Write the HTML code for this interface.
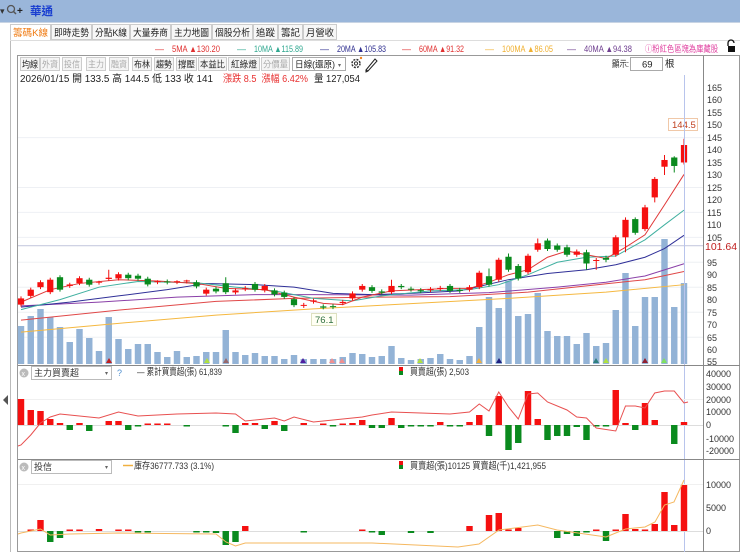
<!DOCTYPE html>
<html><head><meta charset="utf-8"><style>
html,body{margin:0;padding:0;width:740px;height:552px;overflow:hidden;background:#fff}
svg{display:block}
text{font-family:"Liberation Sans","Noto Sans CJK TC",sans-serif}
</style></head><body>
<svg width="740" height="552" viewBox="0 0 740 552" xmlns="http://www.w3.org/2000/svg">
<rect x="0" y="0" width="740" height="22" fill="#9ab6da"/>
<rect x="0" y="22" width="740" height="1" fill="#c8d4e4"/>
<text x="0" y="14" font-size="9" fill="#333">▾</text>
<circle cx="11" cy="9" r="3.5" fill="none" stroke="#555" stroke-width="1.3"/>
<line x1="13.5" y1="11.5" x2="16" y2="14" stroke="#555" stroke-width="1.5"/>
<text x="17" y="14" font-size="10" font-weight="bold" fill="#222">+</text>
<text x="30" y="15" font-size="11.5" fill="#1a3fd0" font-weight="bold">華通</text>
<line x1="10.5" y1="40" x2="10.5" y2="552" stroke="#bbb"/>
<path d="M3 400 L8 395 L8 405 Z" fill="#555"/>
<g font-size="9.5" fill="#222" lengthAdjust="spacingAndGlyphs">
<rect x="10.5" y="24.5" width="40" height="16" fill="#fff" stroke="#ccc"/>
<text x="13" y="36" fill="#f07a10" textLength="35" lengthAdjust="spacingAndGlyphs">籌碼K線</text>
<rect x="51.5" y="24.5" width="40" height="15" fill="#f7f7f7" stroke="#ccc"/><text x="54" y="36" textLength="35" lengthAdjust="spacingAndGlyphs">即時走勢</text>
<rect x="92.5" y="24.5" width="37" height="15" fill="#f7f7f7" stroke="#ccc"/><text x="95" y="36" textLength="32" lengthAdjust="spacingAndGlyphs">分點K線</text>
<rect x="130.5" y="24.5" width="40" height="15" fill="#f7f7f7" stroke="#ccc"/><text x="133" y="36" textLength="35" lengthAdjust="spacingAndGlyphs">大量券商</text>
<rect x="171.5" y="24.5" width="40" height="15" fill="#f7f7f7" stroke="#ccc"/><text x="174" y="36" textLength="35" lengthAdjust="spacingAndGlyphs">主力地圖</text>
<rect x="212.5" y="24.5" width="40" height="15" fill="#f7f7f7" stroke="#ccc"/><text x="215" y="36" textLength="35" lengthAdjust="spacingAndGlyphs">個股分析</text>
<rect x="253.5" y="24.5" width="24" height="15" fill="#f7f7f7" stroke="#ccc"/><text x="256" y="36" textLength="19" lengthAdjust="spacingAndGlyphs">追蹤</text>
<rect x="278.5" y="24.5" width="24" height="15" fill="#f7f7f7" stroke="#ccc"/><text x="281" y="36" textLength="19" lengthAdjust="spacingAndGlyphs">籌記</text>
<rect x="303.5" y="24.5" width="33" height="15" fill="#f7f7f7" stroke="#ccc"/><text x="306" y="36" textLength="28" lengthAdjust="spacingAndGlyphs">月營收</text>
</g>
<line x1="10" y1="40.5" x2="740" y2="40.5" stroke="#ddd"/>
<g font-size="9">
<text x="155" y="52" fill="#e03030">—</text><text x="172" y="52" fill="#e03030" textLength="48" lengthAdjust="spacingAndGlyphs">5MA ▲130.20</text>
<text x="237" y="52" fill="#30a890">—</text><text x="254" y="52" fill="#30a890" textLength="49" lengthAdjust="spacingAndGlyphs">10MA ▲115.89</text>
<text x="320" y="52" fill="#303090">—</text><text x="337" y="52" fill="#303090" textLength="49" lengthAdjust="spacingAndGlyphs">20MA ▲105.83</text>
<text x="402" y="52" fill="#e03030">—</text><text x="419" y="52" fill="#e03030" textLength="45" lengthAdjust="spacingAndGlyphs">60MA ▲91.32</text>
<text x="485" y="52" fill="#f0b030">—</text><text x="502" y="52" fill="#f0b030" textLength="51" lengthAdjust="spacingAndGlyphs">100MA ▲86.05</text>
<text x="567" y="52" fill="#704090">—</text><text x="584" y="52" fill="#704090" textLength="48" lengthAdjust="spacingAndGlyphs">40MA ▲94.38</text>
<text x="645" y="52" fill="#e040a0" textLength="73" lengthAdjust="spacingAndGlyphs">ⓘ粉紅色區塊為庫藏股</text>
</g>
<rect x="728" y="46" width="7" height="6" fill="#111"/>
<path d="M728 46 V43 a3 3 0 0 1 6 0" fill="none" stroke="#111" stroke-width="1.3"/>
<rect x="17.5" y="55.5" width="722" height="496" fill="#fff" stroke="#999"/>
<g font-size="9">
<rect x="20.5" y="57.5" width="19" height="13" fill="#f5f5f5" stroke="#ccc"/><text x="22" y="67.5" fill="#222" textLength="16" lengthAdjust="spacingAndGlyphs">均線</text>
<rect x="40.5" y="57.5" width="19" height="13" fill="#f5f5f5" stroke="#ccc"/><text x="42" y="67.5" fill="#aaa" textLength="16" lengthAdjust="spacingAndGlyphs">外資</text>
<rect x="62.5" y="57.5" width="19" height="13" fill="#f5f5f5" stroke="#ccc"/><text x="64" y="67.5" fill="#aaa" textLength="16" lengthAdjust="spacingAndGlyphs">投信</text>
<rect x="86.5" y="57.5" width="19" height="13" fill="#f5f5f5" stroke="#ccc"/><text x="88" y="67.5" fill="#aaa" textLength="16" lengthAdjust="spacingAndGlyphs">主力</text>
<rect x="109.5" y="57.5" width="19" height="13" fill="#f5f5f5" stroke="#ccc"/><text x="111" y="67.5" fill="#aaa" textLength="16" lengthAdjust="spacingAndGlyphs">融資</text>
<rect x="132.5" y="57.5" width="19" height="13" fill="#f5f5f5" stroke="#ccc"/><text x="134" y="67.5" fill="#222" textLength="16" lengthAdjust="spacingAndGlyphs">布林</text>
<rect x="154.5" y="57.5" width="19" height="13" fill="#f5f5f5" stroke="#ccc"/><text x="156" y="67.5" fill="#222" textLength="16" lengthAdjust="spacingAndGlyphs">趨勢</text>
<rect x="176.5" y="57.5" width="20" height="13" fill="#f5f5f5" stroke="#ccc"/><text x="178" y="67.5" fill="#222" textLength="17" lengthAdjust="spacingAndGlyphs">撐壓</text>
<rect x="198.5" y="57.5" width="28" height="13" fill="#f5f5f5" stroke="#ccc"/><text x="200" y="67.5" fill="#222" textLength="25" lengthAdjust="spacingAndGlyphs">本益比</text>
<rect x="228.5" y="57.5" width="31" height="13" fill="#f5f5f5" stroke="#ccc"/><text x="231" y="67.5" fill="#222" textLength="26" lengthAdjust="spacingAndGlyphs">紅綠燈</text>
<rect x="261.5" y="57.5" width="28" height="13" fill="#f5f5f5" stroke="#ccc"/><text x="263" y="67.5" fill="#aaa" textLength="25" lengthAdjust="spacingAndGlyphs">分價量</text>
<rect x="292.5" y="57.5" width="53" height="13" fill="#fff" stroke="#aaa"/><text x="295" y="67.5" fill="#222" textLength="40" lengthAdjust="spacingAndGlyphs">日線(還原)</text><text x="338" y="67" font-size="6" fill="#666">▾</text>
</g>
<circle cx="356" cy="63.5" r="4" fill="none" stroke="#333" stroke-width="1.5" stroke-dasharray="2 1.2"/>
<circle cx="356" cy="63.5" r="1.6" fill="none" stroke="#333"/>
<circle cx="361" cy="58" r="1.2" fill="#f08020"/>
<path d="M366 70 L375 59 L377 61 L368 71 Z M366 70 L366 72 L368 71" fill="none" stroke="#222" stroke-width="1"/>
<text x="612" y="67" font-size="9" fill="#222" textLength="17" lengthAdjust="spacingAndGlyphs">顯示:</text>
<rect x="630.5" y="57.5" width="32" height="13" fill="#fff" stroke="#aaa"/><text x="642" y="67.5" font-size="9.5" fill="#222">69</text>
<text x="665" y="67" font-size="9.5" fill="#222">根</text>
<text x="20" y="82" font-size="10" fill="#222" textLength="193" lengthAdjust="spacingAndGlyphs">2026/01/15 開 133.5 高 144.5 低 133 收 141</text>
<text x="223" y="82" font-size="10" fill="#e83030" textLength="85" lengthAdjust="spacingAndGlyphs">漲跌 8.5 &#160;漲幅 6.42%</text>
<text x="314" y="82" font-size="10" fill="#222" textLength="46" lengthAdjust="spacingAndGlyphs">量 127,054</text>
<g stroke="#eef0f4">
<line x1="18" y1="237.4" x2="703" y2="237.4"/><line x1="18" y1="262.3" x2="703" y2="262.3"/>
<line x1="18" y1="287.3" x2="703" y2="287.3"/><line x1="18" y1="312.2" x2="703" y2="312.2"/>
<line x1="18" y1="337.2" x2="703" y2="337.2"/><line x1="18" y1="187.5" x2="703" y2="187.5"/>
<line x1="18" y1="137.6" x2="703" y2="137.6"/><line x1="18" y1="212.4" x2="703" y2="212.4"/>
</g>
<line x1="18" y1="245.7" x2="703" y2="245.7" stroke="#c8cce0" stroke-width="1.2"/>
<g transform="matrix(9.75,0,0,1,21,0)" fill="#93b3d6">
<rect x="-.33" y="326" width=".66" height="38"/><rect x=".67" y="316" width=".66" height="48"/><rect x="1.67" y="309" width=".66" height="55"/><rect x="2.67" y="317" width=".66" height="47"/><rect x="3.67" y="327" width=".66" height="37"/><rect x="4.67" y="342" width=".66" height="22"/><rect x="5.67" y="329" width=".66" height="35"/><rect x="6.67" y="338" width=".66" height="26"/><rect x="7.67" y="351" width=".66" height="13"/><rect x="8.67" y="317" width=".66" height="47"/><rect x="9.67" y="339" width=".66" height="25"/><rect x="10.67" y="349" width=".66" height="15"/><rect x="11.67" y="344" width=".66" height="20"/><rect x="12.67" y="344" width=".66" height="20"/><rect x="13.67" y="352" width=".66" height="12"/><rect x="14.67" y="357" width=".66" height="7"/><rect x="15.67" y="351" width=".66" height="13"/><rect x="16.67" y="357" width=".66" height="7"/><rect x="17.67" y="356" width=".66" height="8"/><rect x="18.67" y="352" width=".66" height="12"/><rect x="19.67" y="352" width=".66" height="12"/><rect x="20.67" y="330" width=".66" height="34"/><rect x="21.67" y="352" width=".66" height="12"/><rect x="22.67" y="355" width=".66" height="9"/><rect x="23.67" y="353" width=".66" height="11"/><rect x="24.67" y="356" width=".66" height="8"/><rect x="25.67" y="356" width=".66" height="8"/><rect x="26.67" y="359" width=".66" height="5"/><rect x="27.67" y="355" width=".66" height="9"/><rect x="28.67" y="359" width=".66" height="5"/><rect x="29.67" y="359" width=".66" height="5"/><rect x="30.67" y="359" width=".66" height="5"/><rect x="31.67" y="359" width=".66" height="5"/><rect x="32.67" y="357" width=".66" height="7"/><rect x="33.67" y="353" width=".66" height="11"/><rect x="34.67" y="354" width=".66" height="10"/><rect x="35.67" y="357" width=".66" height="7"/><rect x="36.67" y="356" width=".66" height="8"/><rect x="37.67" y="346" width=".66" height="18"/><rect x="38.67" y="358" width=".66" height="6"/><rect x="39.67" y="360" width=".66" height="4"/><rect x="40.67" y="359" width=".66" height="5"/><rect x="41.67" y="358" width=".66" height="6"/><rect x="42.67" y="354" width=".66" height="10"/><rect x="43.67" y="359" width=".66" height="5"/><rect x="44.67" y="360" width=".66" height="4"/><rect x="45.67" y="356" width=".66" height="8"/><rect x="46.67" y="327" width=".66" height="37"/><rect x="47.67" y="297" width=".66" height="67"/><rect x="48.67" y="308" width=".66" height="56"/><rect x="49.67" y="281" width=".66" height="83"/><rect x="50.67" y="316" width=".66" height="48"/><rect x="51.67" y="314" width=".66" height="50"/><rect x="52.67" y="293" width=".66" height="71"/><rect x="53.67" y="331" width=".66" height="33"/><rect x="54.67" y="336" width=".66" height="28"/><rect x="55.67" y="336" width=".66" height="28"/><rect x="56.67" y="344" width=".66" height="20"/><rect x="57.67" y="333" width=".66" height="31"/><rect x="58.67" y="346" width=".66" height="18"/><rect x="59.67" y="343" width=".66" height="21"/><rect x="60.67" y="310" width=".66" height="54"/><rect x="61.67" y="273" width=".66" height="91"/><rect x="62.67" y="326" width=".66" height="38"/><rect x="63.67" y="297" width=".66" height="67"/><rect x="64.67" y="297" width=".66" height="67"/><rect x="65.67" y="239" width=".66" height="125"/><rect x="66.67" y="307" width=".66" height="57"/><rect x="67.67" y="283" width=".66" height="81"/>
</g>
<g>
<path d="M106 363 l3 -5 l3 5z" fill="#c02020"/><path d="M204 363 l3 -5 l3 5z" fill="#b0e040"/><path d="M223 363 l3 -5 l3 5z" fill="#a0d8e0"/><path d="M223 363 l3 -5 l3 5z" fill="#902020" opacity=".6"/>
<path d="M300 363 l3 -5 l3 5z" fill="#5020a0"/><path d="M329 363 l3 -5 l3 5z" fill="#f09090"/><path d="M339 363 l3 -5 l3 5z" fill="#f09090"/>
<path d="M417 363 l3 -5 l3 5z" fill="#b0e040"/><path d="M476 363 l3 -5 l3 5z" fill="#f0b040"/><path d="M496 363 l3 -5 l3 5z" fill="#202080"/>
<path d="M593 363 l3 -5 l3 5z" fill="#308080"/><path d="M603 363 l3 -5 l3 5z" fill="#b0e040"/><path d="M642 363 l3 -5 l3 5z" fill="#902030"/><path d="M661 363 l3 -5 l3 5z" fill="#80e060"/>
</g>
<g transform="matrix(9.75,0,0,-2.494,21,499.17)" fill="none">
<polyline vector-effect="non-scaling-stroke" stroke="#f5b840" stroke-width="1" points="0,67 10,70.5 20,73.8 30,76.3 40,78.4 50,80.5 60,83 68,86"/>
<polyline vector-effect="non-scaling-stroke" stroke="#e04848" stroke-width="1" points="0,71.8 10,75.8 20,79.3 28,80.5 36,81 44,81.2 52,83 58,85.5 64,88 68,91.3"/>
<polyline vector-effect="non-scaling-stroke" stroke="#8a40a8" stroke-width="1" points="0,77.5 8,79 16,81 24,82 30,82 40,81.8 48,82.8 55,85 60,87 64,89.5 68,94.4"/>
<polyline vector-effect="non-scaling-stroke" stroke="#303098" stroke-width="1" points="0,77 5,79 10,81.5 15,84 19,86.5 24,86 28,85 32,82.5 36,82 40,82.5 45,83.5 50,88 54,90.5 58,92 61,94 64,97 66,100.5 68,105.8"/>
<polyline vector-effect="non-scaling-stroke" stroke="#40b0a0" stroke-width="1" points="0,76 4,80 8,85 12,87.3 18,86.8 22,85 26,83.5 30,80.5 34,79.5 37,81.5 42,83.5 46,84 49,86 52,90 55,95 58,97 61,97.5 64,104 66,110 68,115.9"/>
<polyline vector-effect="non-scaling-stroke" stroke="#e03838" stroke-width="1" points="0,79 3,84 6,86.5 10,88 14,87.5 18,86.5 21,84.5 25,84 28,81 31,78.5 33,78 35,81 38,83.5 44,84.5 46,84.5 48,87 50,90 52,92 54,97 56,99.5 58,98 60,96.5 62,101 64,106 66,118 68,130.2"/>
<path vector-effect="non-scaling-stroke" stroke="#f01010" stroke-width="1" d="M0 77.2V81.3M1 80.7V84.8M2 84.2V87.8M3 82.2V88.8M5 84.7V86.8M6 85.8V89.4M8 86V87.6M9 87.5V92M10 87.7V91M14 86.2V87.8M16 86.2V87.8M17 86.5V88M19 81.6V84.8M22 82.1V84.5M23 83.4V85.4M25 82.9V86.3M29 76.7V78.7M30 78.4V80.4M33 77.8V79.9M34 79.7V83.3M35 83.2V86.3M38 82.2V88M42 83V85M43 83.5V85.5M46 83.2V85.8M47 84.2V91.6M49 87.2V96.8M52 90.2V98.4M53 99.2V104.5M57 97.2V100.1M59 92V96.7M61 97.2V105.8M62 99V113M64 107.5V118M65 119V129.2M66 130V138M68 134.2V144.5"/>
<path vector-effect="non-scaling-stroke" stroke="#0a8a1e" stroke-width="1" d="M4 83.2V89.8M7 85.2V88.8M11 87.8V90.8M12 87.6V90.4M13 85.3V89.2M15 86.1V88.1M18 84.5V87.8M20 82.5V85.2M21 82.2V89M24 83.2V87.1M26 81.3V84.5M27 80.3V83.6M28 77V81M31 76.1V78.1M32 76.2V78.2M36 82.7V85.8M37 82V84.1M39 84.2V86.3M40 83.2V85.2M41 82.6V84.6M44 82.7V86.3M45 82.7V84.7M48 85.2V92.5M50 91.2V98.5M51 87.7V94.3M54 99.5V104.5M55 99.2V102.5M56 97.2V102M58 92V100M60 95V97.6M63 106V113M67 131V137.5"/>
<g fill="#f51010">
<rect x="-.32" y="78" width=".64" height="2.5"/><rect x=".68" y="81.5" width=".64" height="2.5"/><rect x="1.68" y="85" width=".64" height="2"/><rect x="2.68" y="83" width=".64" height="5"/><rect x="4.68" y="85.5" width=".64" height=".6"/><rect x="5.68" y="86.6" width=".64" height="2"/><rect x="7.68" y="86.8" width=".64" height=".4"/><rect x="8.68" y="88.3" width=".64" height=".5"/><rect x="9.68" y="88.5" width=".64" height="1.7"/><rect x="13.68" y="87" width=".64" height=".4"/><rect x="15.68" y="87" width=".64" height=".4"/><rect x="16.68" y="87.3" width=".64" height=".4"/><rect x="18.68" y="82.4" width=".64" height="1.6"/><rect x="21.68" y="82.9" width=".64" height=".8"/><rect x="22.68" y="84.2" width=".64" height=".4"/><rect x="24.68" y="83.7" width=".64" height="1.8"/><rect x="28.68" y="77.5" width=".64" height=".4"/><rect x="29.68" y="79.2" width=".64" height=".5"/><rect x="32.68" y="78.6" width=".64" height=".5"/><rect x="33.68" y="80.5" width=".64" height="2"/><rect x="34.68" y="84" width=".64" height="1.5"/><rect x="37.68" y="83" width=".64" height="2.5"/><rect x="41.68" y="83.8" width=".64" height=".4"/><rect x="42.68" y="84.3" width=".64" height=".4"/><rect x="45.68" y="84" width=".64" height="1"/><rect x="46.68" y="85" width=".64" height="5.8"/><rect x="48.68" y="88" width=".64" height="8"/><rect x="51.68" y="91" width=".64" height="6.6"/><rect x="52.68" y="100" width=".64" height="2.6"/><rect x="56.68" y="98" width=".64" height="1.3"/><rect x="58.68" y="95.5" width=".64" height=".4"/><rect x="60.68" y="98" width=".64" height="7"/><rect x="61.68" y="105" width=".64" height="7"/><rect x="63.68" y="108.3" width=".64" height="8.7"/><rect x="64.68" y="121" width=".64" height="7.4"/><rect x="65.68" y="133.3" width=".64" height="2.7"/><rect x="67.68" y="135" width=".64" height="7"/>
</g>
<g fill="#0a8a1e">
<rect x="3.68" y="84" width=".64" height="5"/><rect x="6.68" y="86" width=".64" height="2"/><rect x="10.68" y="88.6" width=".64" height="1.4"/><rect x="11.68" y="88.4" width=".64" height="1.2"/><rect x="12.68" y="86.1" width=".64" height="2.3"/><rect x="14.68" y="86.9" width=".64" height=".4"/><rect x="17.68" y="85.3" width=".64" height="1.7"/><rect x="19.68" y="83.3" width=".64" height="1.1"/><rect x="20.68" y="83" width=".64" height="3.6"/><rect x="23.68" y="84" width=".64" height="2.3"/><rect x="25.68" y="82.1" width=".64" height="1.6"/><rect x="26.68" y="81.1" width=".64" height="1.7"/><rect x="27.68" y="77.8" width=".64" height="2.4"/><rect x="30.68" y="76.8" width=".64" height=".5"/><rect x="31.68" y="77" width=".64" height=".4"/><rect x="35.68" y="83.5" width=".64" height="1.5"/><rect x="36.68" y="82.8" width=".64" height=".5"/><rect x="38.68" y="85" width=".64" height=".5"/><rect x="39.68" y="84" width=".64" height=".4"/><rect x="40.68" y="83.4" width=".64" height=".4"/><rect x="43.68" y="83.5" width=".64" height="2"/><rect x="44.68" y="83.5" width=".64" height=".4"/><rect x="47.68" y="86" width=".64" height="3.4"/><rect x="49.68" y="92" width=".64" height="5.2"/><rect x="50.68" y="88.5" width=".64" height="5"/><rect x="53.68" y="100.3" width=".64" height="3.4"/><rect x="54.68" y="100" width=".64" height="1.7"/><rect x="55.68" y="98" width=".64" height="3"/><rect x="57.68" y="94.5" width=".64" height="4.5"/><rect x="59.68" y="96" width=".64" height=".8"/><rect x="62.68" y="106.8" width=".64" height="5.5"/><rect x="66.68" y="133.6" width=".64" height="3.4"/>
</g>
</g>
<rect x="668.5" y="118.5" width="29" height="12" fill="#fff" stroke="#f0c8a8"/>
<text x="672" y="128" font-size="9.5" fill="#c04020">144.5</text>
<rect x="311.5" y="313.5" width="25" height="12" fill="#fffff4" stroke="#dde0c0"/>
<text x="315" y="323" font-size="9.5" fill="#307040">76.1</text>
<line x1="684.5" y1="75" x2="684.5" y2="552" stroke="#b8c4ec"/>
<line x1="703.5" y1="56" x2="703.5" y2="552" stroke="#888"/>
<g font-size="9" fill="#333">
<text x="707" y="91">165</text><text x="707" y="103">160</text><text x="707" y="116">155</text><text x="707" y="128">150</text><text x="707" y="141">145</text><text x="707" y="153">140</text><text x="707" y="166">135</text><text x="707" y="178">130</text><text x="707" y="191">125</text><text x="707" y="203">120</text><text x="707" y="216">115</text><text x="707" y="228">110</text><text x="707" y="241">105</text><text x="707" y="266">95</text><text x="707" y="278">90</text><text x="707" y="291">85</text><text x="707" y="303">80</text><text x="707" y="316">75</text><text x="707" y="328">70</text><text x="707" y="341">65</text><text x="707" y="353">60</text><text x="707" y="365">55</text>
</g>
<text x="705" y="250" font-size="10.5" fill="#c02020">101.64</text>
<line x1="18" y1="365.5" x2="740" y2="365.5" stroke="#888"/>
<line x1="18" y1="459.5" x2="740" y2="459.5" stroke="#888"/>
<circle cx="24" cy="373" r="4.5" fill="#bbb"/><text x="21.5" y="376" font-size="7" fill="#fff">x</text>
<rect x="31.5" y="366.5" width="80" height="13" fill="#fff" stroke="#bbb"/><text x="34" y="376" font-size="9" fill="#333">主力買賣超</text><text x="105" y="375" font-size="6" fill="#666">▾</text>
<text x="117" y="376" font-size="9" fill="#5090d0">?</text>
<text x="137" y="375" font-size="9.5" fill="#333" textLength="85" lengthAdjust="spacingAndGlyphs">— 累計買賣超(張) 61,839</text>
<rect x="399" y="367" width="4" height="4" fill="#f01010"/><rect x="399" y="371" width="4" height="4" fill="#0a8a1e"/>
<text x="410" y="375" font-size="9.5" fill="#333" textLength="59" lengthAdjust="spacingAndGlyphs">買賣超(張) 2,503</text>
<line x1="18" y1="399.5" x2="703" y2="399.5" stroke="#f0f0f0"/>
<line x1="18" y1="425.5" x2="703" y2="425.5" stroke="#ddd"/>
<g font-size="9" fill="#333"><text x="706" y="377">40000</text><text x="706" y="390">30000</text><text x="706" y="403">20000</text><text x="706" y="415">10000</text><text x="706" y="428">0</text><text x="706" y="442">-10000</text><text x="706" y="454">-20000</text></g>
<g transform="matrix(9.75,0,0,1,21,0)" fill="#f51010">
<rect x="-.33" y="399" width=".66" height="26"/><rect x=".67" y="410" width=".66" height="15"/><rect x="1.67" y="411" width=".66" height="14"/><rect x="2.67" y="419" width=".66" height="6"/><rect x="3.67" y="423" width=".66" height="2"/><rect x="5.67" y="423" width=".66" height="2"/><rect x="8.67" y="421" width=".66" height="4"/><rect x="9.67" y="421" width=".66" height="4"/><rect x="12.67" y="423.5" width=".66" height="1.5"/><rect x="13.67" y="423.5" width=".66" height="1.5"/><rect x="14.67" y="423.5" width=".66" height="1.5"/><rect x="22.67" y="423" width=".66" height="2"/><rect x="23.67" y="423" width=".66" height="2"/><rect x="25.67" y="421" width=".66" height="4"/><rect x="28.67" y="423" width=".66" height="2"/><rect x="30.67" y="423.5" width=".66" height="1.5"/><rect x="32.67" y="423.5" width=".66" height="1.5"/><rect x="33.67" y="423" width=".66" height="2"/><rect x="34.67" y="420" width=".66" height="5"/><rect x="37.67" y="418" width=".66" height="7"/><rect x="42.67" y="422" width=".66" height="3"/><rect x="45.67" y="422" width=".66" height="3"/><rect x="46.67" y="415" width=".66" height="10"/><rect x="48.67" y="396" width=".66" height="29"/><rect x="51.67" y="391" width=".66" height="34"/><rect x="52.67" y="419" width=".66" height="6"/><rect x="60.67" y="390" width=".66" height="35"/><rect x="61.67" y="423" width=".66" height="2"/><rect x="63.67" y="403" width=".66" height="22"/><rect x="64.67" y="420" width=".66" height="5"/><rect x="67.67" y="422" width=".66" height="3"/>
</g>
<g transform="matrix(9.75,0,0,1,21,0)" fill="#0a8a1e">
<rect x="4.67" y="425" width=".66" height="5"/><rect x="6.67" y="425" width=".66" height="6"/><rect x="10.67" y="425" width=".66" height="5"/><rect x="11.67" y="425" width=".66" height="1.5"/><rect x="16.67" y="425" width=".66" height="1.5"/><rect x="20.67" y="425" width=".66" height="1.5"/><rect x="21.67" y="425" width=".66" height="8"/><rect x="24.67" y="425" width=".66" height="4"/><rect x="26.67" y="425" width=".66" height="6"/><rect x="31.67" y="425" width=".66" height="1.5"/><rect x="35.67" y="425" width=".66" height="3"/><rect x="36.67" y="425" width=".66" height="3"/><rect x="38.67" y="425" width=".66" height="3"/><rect x="39.67" y="425" width=".66" height="1.5"/><rect x="40.67" y="425" width=".66" height="1.5"/><rect x="41.67" y="425" width=".66" height="1.5"/><rect x="43.67" y="425" width=".66" height="1.5"/><rect x="44.67" y="425" width=".66" height="1.5"/><rect x="47.67" y="425" width=".66" height="11"/><rect x="49.67" y="425" width=".66" height="25"/><rect x="50.67" y="425" width=".66" height="18"/><rect x="53.67" y="425" width=".66" height="15"/><rect x="54.67" y="425" width=".66" height="11"/><rect x="55.67" y="425" width=".66" height="11"/><rect x="56.67" y="425" width=".66" height="2"/><rect x="57.67" y="425" width=".66" height="15"/><rect x="58.67" y="425" width=".66" height="1.5"/><rect x="59.67" y="425" width=".66" height="1.5"/><rect x="62.67" y="425" width=".66" height="5"/><rect x="66.67" y="425" width=".66" height="19"/>
</g>
<polyline fill="none" stroke="#e85050" stroke-width="1" points="18,446 21,445 30.75,435 40.5,423 50.25,417 60,414 69.75,415 99,418 118.5,412 138,416 177,414 216,413 235.5,414 245.25,421 274.5,418 284.25,421 294,417 313.5,422 362.25,417 372,415 391.5,412 450,414 469.5,412 479.25,404 489,411 498.75,392 508.5,407 518.25,419 528,394 537.75,393 547.5,402 567,410 576.75,417 586.5,418 596.25,428 615.75,431 625.5,406 635.25,406 645,408 654.75,393 664.5,391 674.25,391 684,403 688,402"/>
<circle cx="24" cy="467" r="4.5" fill="#bbb"/><text x="21.5" y="470" font-size="7" fill="#fff">x</text>
<rect x="31.5" y="460.5" width="80" height="13" fill="#fff" stroke="#bbb"/><text x="34" y="470" font-size="9" fill="#333">投信</text><text x="105" y="469" font-size="6" fill="#666">▾</text>
<line x1="123" y1="465.5" x2="133" y2="465.5" stroke="#f0b040" stroke-width="1.5"/>
<text x="134" y="469" font-size="9.5" fill="#333" textLength="80" lengthAdjust="spacingAndGlyphs">庫存36777.733 (3.1%)</text>
<rect x="399" y="461" width="4" height="4" fill="#f01010"/><rect x="399" y="465" width="4" height="4" fill="#0a8a1e"/>
<text x="410" y="469" font-size="9.5" fill="#333" textLength="136" lengthAdjust="spacingAndGlyphs">買賣超(張)10125 買賣超(千)1,421,955</text>
<line x1="18" y1="484.5" x2="703" y2="484.5" stroke="#f0f0f0"/>
<line x1="18" y1="531.5" x2="703" y2="531.5" stroke="#ddd"/>
<g font-size="9" fill="#333"><text x="706" y="488">10000</text><text x="706" y="511">5000</text><text x="706" y="534">0</text></g>
<g transform="matrix(9.75,0,0,1,21,0)" fill="#f51010">
<rect x=".67" y="529.5" width=".66" height="1.5"/><rect x="1.67" y="520" width=".66" height="11"/><rect x="4.67" y="529.5" width=".66" height="1.5"/><rect x="5.67" y="529.5" width=".66" height="1.5"/><rect x="7.67" y="529" width=".66" height="2"/><rect x="9.67" y="529.5" width=".66" height="1.5"/><rect x="10.67" y="529.5" width=".66" height="1.5"/><rect x="22.67" y="526" width=".66" height="5"/><rect x="34.67" y="529.5" width=".66" height="1.5"/><rect x="45.67" y="526" width=".66" height="5"/><rect x="47.67" y="515" width=".66" height="16"/><rect x="48.67" y="513" width=".66" height="18"/><rect x="49.67" y="529.5" width=".66" height="1.5"/><rect x="50.67" y="528" width=".66" height="3"/><rect x="58.67" y="529.5" width=".66" height="1.5"/><rect x="60.67" y="529.5" width=".66" height="1.5"/><rect x="61.67" y="514" width=".66" height="17"/><rect x="62.67" y="529" width=".66" height="2"/><rect x="63.67" y="529.5" width=".66" height="1.5"/><rect x="64.67" y="524" width=".66" height="7"/><rect x="65.67" y="492" width=".66" height="39"/><rect x="66.67" y="525" width=".66" height="6"/><rect x="67.67" y="485" width=".66" height="46"/>
</g>
<g transform="matrix(9.75,0,0,1,21,0)" fill="#0a8a1e">
<rect x="2.67" y="531" width=".66" height="11"/><rect x="3.67" y="531" width=".66" height="7"/><rect x="11.67" y="531" width=".66" height="1.5"/><rect x="12.67" y="531" width=".66" height="1.5"/><rect x="17.67" y="531" width=".66" height="1.5"/><rect x="18.67" y="531" width=".66" height="1.5"/><rect x="19.67" y="531" width=".66" height="2"/><rect x="20.67" y="531" width=".66" height="14"/><rect x="21.67" y="531" width=".66" height="11"/><rect x="28.67" y="531" width=".66" height="1.5"/><rect x="35.67" y="531" width=".66" height="1.5"/><rect x="36.67" y="531" width=".66" height="4"/><rect x="39.67" y="531" width=".66" height="2"/><rect x="41.67" y="531" width=".66" height="2"/><rect x="54.67" y="531" width=".66" height="7"/><rect x="55.67" y="531" width=".66" height="3"/><rect x="56.67" y="531" width=".66" height="5"/><rect x="57.67" y="531" width=".66" height="1.5"/><rect x="59.67" y="531" width=".66" height="10"/>
</g>
<polyline fill="none" stroke="#f5b860" stroke-width="1" points="18,534 21,533 40.5,529 50.25,535 69.75,534 118.5,533 216,534 226,542 235.5,546 245.25,543 372,543 458,547 479,544 499,530 537.75,525 557,530 606,537 625.5,529 645,527 655,522 664.5,505 674,502 684,480"/>
</svg>
</body></html>
